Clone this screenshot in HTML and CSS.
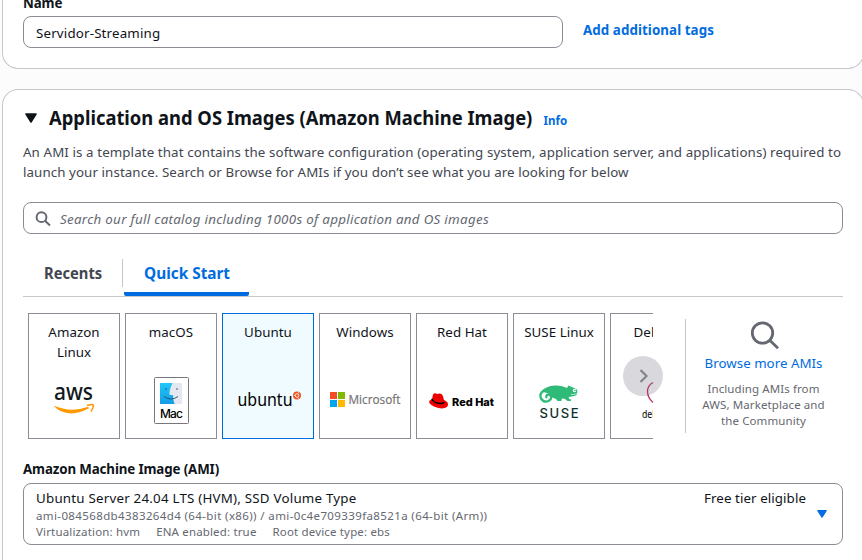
FILE: index.html
```html
<!DOCTYPE html>
<html lang="en">
<head>
<meta charset="utf-8">
<title>Launch an instance</title>
<link rel="stylesheet" href="styles.css">
</head>
<body>
<main class="page">
  <section class="card name-card">
    <label class="label name-label">Name</label>
    <div class="name-row">
      <div class="input name-input"><span class="name-value">Servidor-Streaming</span></div>
      <a class="tags-link">Add additional tags</a>
    </div>
  </section>

  <section class="card ami-card">
    <header class="heading">
      <svg class="caret" width="12" height="10" viewBox="0 0 12 10"><path d="M1 1h10L6 9z" fill="#0f141a" stroke="#0f141a" stroke-width="1.5" stroke-linejoin="round"/></svg>
      <h2 class="title"><span>Application and OS Images (Amazon Machine Image)</span></h2>
      <a class="info">Info</a>
    </header>
    <p class="description"><span class="line-a">An AMI is a template that contains the software configuration (operating system, application server, and applications) required to</span><br><span class="line-b">launch your instance. Search or Browse for AMIs if you don’t see what you are looking for below</span></p>
    <div class="input search">
      <svg width="16" height="16" viewBox="0 0 16 16" fill="none" stroke="#656871" stroke-width="2"><circle cx="6.5" cy="6.2" r="4.9"/><path d="M10 9.7l5 4.8"/></svg>
      <span class="placeholder">Search our full catalog including 1000s of application and OS images</span>
    </div>
    <nav class="tabs">
      <a class="tab recents"><span>Recents</span></a>
      <a class="tab quick"><span>Quick Start</span></a>
    </nav>
    <div class="quick-start">
      <div class="strip">
        <div class="tiles">
          <div class="tile"><span class="tile-name">Amazon<br>Linux</span>
            <svg class="logo" width="90" height="64" viewBox="0 0 90 64"><text x="25" y="36" class="aws-word" textLength="39" lengthAdjust="spacingAndGlyphs">aws</text><path d="M24.500 41.500q17 7.500 34 1.500l2 1q-16 9-29 3-4-2-7-5.500z" fill="#ff9900"/><path d="M58 41.500q6.500-2 6.500 0t-2.500 6" stroke="#ff9900" fill="none" stroke-width="1.500"/></svg>
          </div>
          <div class="tile"><span class="tile-name">macOS</span>
            <svg class="logo" width="90" height="64" viewBox="0 0 90 64">
              <defs><linearGradient id="face" x2="0" y2="1"><stop stop-color="#20c8fa"/><stop offset="1" stop-color="#149be4"/></linearGradient></defs>
              <rect x="28.500" y="13.500" width="34" height="46" rx="1" fill="#fff" stroke="#77777b"/>
              <path d="M34 19h22v21H34z" fill="#e5e8ef"/><path d="M34 19h12.500q-3.500 7-3 12h3.500q0 5 1.500 9H34z" fill="url(#face)"/>
              <path d="M40 24v2M51 24v2M38 32.500q7 5 14 0" fill="none" stroke="#234c69" stroke-width=".9"/>
              <text x="45.500" y="54" text-anchor="middle" class="mac-word" textLength="23">Mac</text>
            </svg>
          </div>
          <div class="tile selected"><span class="tile-name">Ubuntu</span>
            <svg class="logo" width="90" height="64" viewBox="0 0 90 64"><g class="ubuntu-word"><text x="14.500" y="41.500" textLength="55" lengthAdjust="spacingAndGlyphs">ubuntu</text></g><circle cx="74" cy="31.500" r="4" fill="#e95420"/><circle cx="74" cy="31.500" r="1.800" fill="none" stroke="#fff" stroke-width=".8"/><path d="M71 31.500h1.200M75 29.500l1-1.500M75 33.500l1 1.500" stroke="#fff" stroke-width=".7"/></svg>
          </div>
          <div class="tile"><span class="tile-name">Windows</span>
            <svg class="logo" width="90" height="64" viewBox="0 0 90 64"><path d="M10 28h7v7h-7z" fill="#f25022"/><path d="M18 28h7v7h-7z" fill="#7fba00"/><path d="M10 36h7v7h-7z" fill="#00a4ef"/><path d="M18 36h7v7h-7z" fill="#ffb900"/><text x="28.500" y="40" class="ms-word" textLength="52" lengthAdjust="spacingAndGlyphs">Microsoft</text></svg>
          </div>
          <div class="tile"><span class="tile-name">Red Hat</span>
            <svg class="logo" width="90" height="64" viewBox="0 0 90 64"><path d="M17 30.500q1.500-2 4-.6 3-1 4.500.2 2 1.600 2.500 6 4.500 2 4 5-1 4-8 3.200-7-1-10.500-5-1.300-3 2.500-3.800z" fill="#e00" transform="translate(-1)"/><path d="M14.700 34.800q2 4.500 9 4.800 3 0 3.500-1.600" fill="none" stroke="#000" stroke-width="1.500"/><text x="35" y="41.500" class="rh-word" textLength="42" lengthAdjust="spacingAndGlyphs">Red Hat</text></svg>
          </div>
          <div class="tile"><span class="tile-name">SUSE Linux</span>
            <svg class="logo" width="90" height="64" viewBox="0 0 90 64"><path d="M27 28q4-6 14-6.500 7-.5 12 2.500l1.500-2.500 4.500 2 4 2q1 4-1 6l-4 1q-3 0-3.500 1 .5 1.800 2.500 2v1.500h-3.500q-2.500-3-5-2.500-1.500.5-1 2.500h-4q-1-2.500-4-3-3-1-4.500-4-3-2-8-2z" fill="#30ba78"/><path d="M39 28q-5-4-9.300-1.300Q25 29.500 27 34.500q3 4.500 7.500 2.500 3.800-2.300 2.300-5-2-2.300-4-.8-1.300 1.800.5 2.500" fill="none" stroke="#30ba78" stroke-width="2.300"/><circle cx="60.500" cy="26.500" r="1.700" fill="#fff"/><circle cx="60.800" cy="26.500" r=".8" fill="#30ba78"/><path d="M57 30.500q3 .5 6-1" fill="none" stroke="#fff" stroke-width=".6"/><text x="25.500" y="54" class="suse-word" textLength="39">SUSE</text></svg>
          </div>
          <div class="tile"><span class="tile-name">Debian</span>
            <svg class="logo" width="90" height="64" viewBox="0 0 90 64"><text x="31" y="54" class="deb-word" textLength="28" lengthAdjust="spacingAndGlyphs">debian</text></svg>
          </div>
        </div>
        <div class="next"><svg width="40" height="40" viewBox="0 0 40 40"><path d="M17.500 14l6 6-6 6" fill="none" stroke="#85868c" stroke-width="2.200"/><path d="M30 26.500q-5.500 3-5.500 9t5.500 11" fill="none" stroke="#b8335f" stroke-width="1.300"/></svg></div>
      </div>
      <aside class="browse">
        <svg width="30" height="30" viewBox="0 0 30 30" fill="none" stroke="#656871" stroke-width="2.800"><circle cx="12.500" cy="12" r="10.200"/><path d="M19.500 19l8.500 8.200"/></svg>
        <a class="browse-link">Browse more AMIs</a>
        <p class="browse-text">Including AMIs from<br>AWS, Marketplace and<br>the Community</p>
      </aside>
    </div>
    <div class="label ami-label"><span>Amazon Machine Image (AMI)</span></div>
    <div class="select">
      <div class="select-main">
        <div class="ami-name"><span class="server">Ubuntu Server 24.04 LTS (HVM), SSD Volume Type</span></div>
        <div class="meta"><span class="ids">ami-084568db4383264d4 (64-bit (x86)) / ami-0c4e709339fa8521a (64-bit (Arm))</span></div>
        <div class="meta specs"><span>Virtualization: hvm</span><span>ENA enabled: true</span><span>Root device type: ebs</span></div>
      </div>
      <span class="free">Free tier eligible</span>
      <svg class="down" width="12" height="10" viewBox="0 0 12 10"><path d="M1.500 1.500h9L6 8.500z" fill="#006ce0" stroke="#006ce0" stroke-linejoin="round"/></svg>
    </div>
  </section>
</main>
</body>
</html>
```

FILE: styles.css
```css
* { box-sizing: border-box; }
body { margin: 0; background: #fcfcfd; color: #0f141a; font: 13.33px/20px "Noto Sans", sans-serif; overflow: hidden; height: 560px; }
h2, p { margin: 0; }
span, a, h2 { white-space: nowrap; }
.page { width: 864px; padding-left: 2px; }
.card { background: #fff; border: 1px solid #c6c6cd; border-radius: 16px; padding: 0 20px; width: 862px; }
.name-card { height: 69px; border-top: 0; border-radius: 0 0 16px 16px; }
.label { font-weight: 700; }
.name-label { display: block; height: 16px; margin-top: 0; position: relative; top: -7px; letter-spacing: -.1px; }
.name-value { letter-spacing: .17px; }
.name-row { display: flex; gap: 20px; }
.input { height: 32px; border: 1px solid #8c8c94; border-radius: 8px; display: flex; align-items: center; padding: 2px 12px 0; }
.name-input { width: 540px; }
.tags-link { font-weight: 700; color: #006ce0; line-height: 28px; letter-spacing: .08px; }
.ami-card { margin-top: 20px; height: 471px; border-bottom: 0; border-radius: 16px 16px 0 0; }
.heading { display: flex; height: 52px; align-items: center; padding: 4px 0 0 2px; }
.title { font-size: 20px; line-height: 24px; margin-left: 12px; width: 483px; }
.title span { display: inline-block; transform: scaleX(.9185); transform-origin: 0 50%; }
.info { margin: 6px 0 0 11.5px; font-size: 11.5px; font-weight: 700; color: #006ce0; }
.description { color: #424650; }
.line-a { letter-spacing: .1px; }
.line-b { letter-spacing: .085px; }
.search { margin-top: 20px; gap: 9px; padding-left: 11px; }
.search svg { margin-top: -1px; }
.placeholder { font-style: italic; color: #656871; letter-spacing: .3px; }
.tabs { height: 63px; border-bottom: 1px solid #c6c6cd; display: flex; align-items: flex-end; }
.tab { font-size: 16px; font-weight: 700; line-height: 20px; }
.tab span { display: inline-block; transform: scaleX(.92); transform-origin: 0 50%; }
.recents { height: 28px; margin-bottom: 9px; width: 100px; padding: 4px 0 0 21px; color: #424650; border-right: 1px solid #c6c6cd; }
.quick { color: #006ce0; height: 37px; width: 125px; padding: 4px 0 0 20px; margin-left: 1px; border-bottom: 4px solid #006ce0; border-radius: 0 0 2px 2px; }
.quick span { transform: scaleX(.96); }
.quick-start { display: flex; padding: 16px 0 0 5px; height: 162px; }
.strip { position: relative; width: 625px; height: 126px; }
.tiles { display: flex; gap: 5px; width: 625px; height: 126px; overflow: hidden; }
.tile { flex: 0 0 92px; height: 126px; border: 1px solid #8c8c94; padding-top: 8px; display: flex; flex-direction: column; justify-content: space-between; align-items: center; text-align: center; }
.tile-name { letter-spacing: .05px; }
.selected { border-color: #006ce0; background: #f0fbff; }
.logo { flex: none; margin-bottom: 10px; }
.next { position: absolute; left: 595px; top: 43px; width: 40px; height: 40px; border-radius: 50%; background: rgb(216, 216, 221); }
.next svg { display: block; overflow: visible; }
.browse { margin: 6px 0 0 32px; height: 114px; width: 157px; border-left: 1px solid #c6c6cd; display: flex; flex-direction: column; align-items: center; flex: none; }
.browse > svg { flex: none; margin-top: 2px; margin-left: 2px; }
.browse-link { color: #006ce0; margin: 2px 1px 0 0; }
.browse-text { color: #656871; text-align: center; font-size: 11.5px; line-height: 16px; margin: 8px 1px 0 0; letter-spacing: .1px; }
.ami-label { letter-spacing: -.13px; }
.select { height: 62px; border: 1px solid #8c8c94; border-radius: 8px; margin-top: 4px; padding: 4px 14px 0 12px; display: flex; }
.select-main { flex: 1; }
.server { letter-spacing: .22px; }
.free { letter-spacing: .08px; }
.meta { color: #656871; font-size: 11.5px; line-height: 16px; letter-spacing: .16px; }
.ids { letter-spacing: .38px; }
.specs { display: flex; gap: 16px; }
.down { margin: 21px 0 0 10px; }
.aws-word { font: 500 23px "Noto Sans", sans-serif; fill: #101820; }
.mac-word { font: 500 12px Inter, sans-serif; }
.ubuntu-word { font: 18px "Noto Sans", sans-serif; }
.ms-word { font: 12.500px "Open Sans", sans-serif; fill: #737373; stroke: #737373; stroke-width: .2; }
.rh-word { font: 800 11px Inter, sans-serif; }
.suse-word { font: 500 13px Inter, sans-serif; fill: #0c322c; }
.deb-word { font: 11px "Noto Sans", sans-serif; }
```
